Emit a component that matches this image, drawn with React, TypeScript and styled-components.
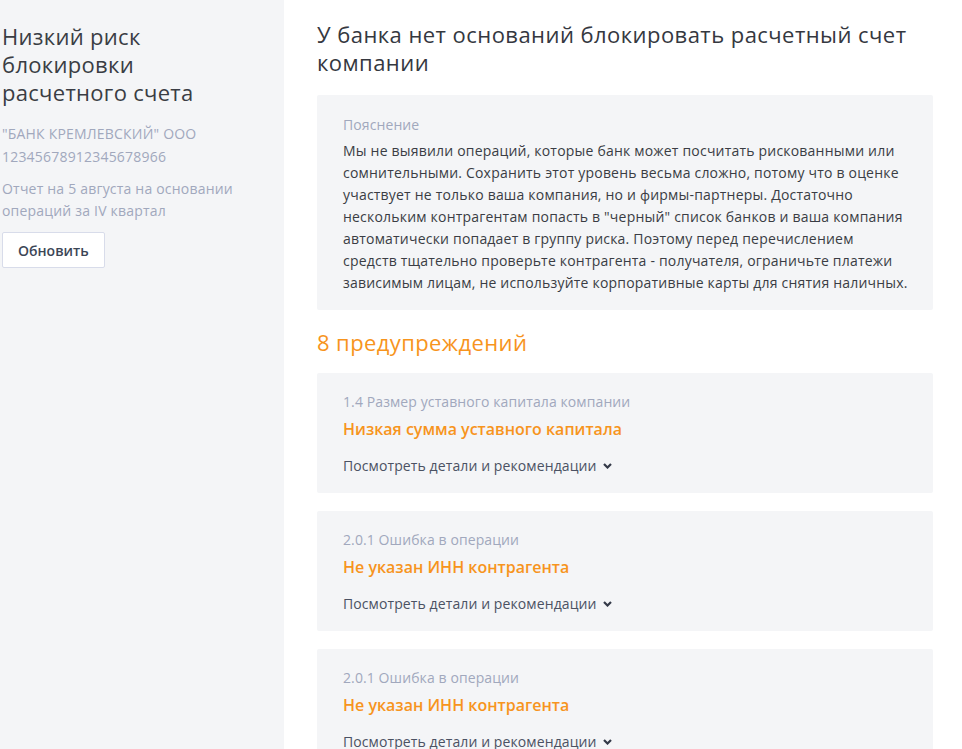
import * as React from 'react';
import styled, { createGlobalStyle } from 'styled-components';

const GlobalStyle = createGlobalStyle`
  html, body {
    margin: 0;
    padding: 0;
    background: #ffffff;
  }
  body {
    font-family: "Open Sans", "Liberation Sans", sans-serif;
    color: #3a3d44;
  }
`;

const Page = styled.div`
  display: flex;
  min-height: 100vh;
`;

const Sidebar = styled.aside`
  flex: 0 0 284px;
  box-sizing: border-box;
  padding: 22px 20px 0 2px;
  background: #f4f5f7;
`;

const SideTitle = styled.h1`
  margin: 0;
  max-width: 215px;
  font-size: 22px;
  line-height: 28px;
  font-weight: 400;
  letter-spacing: 0.3px;
  color: #3a3d44;
`;

const SideMeta = styled.p<{ $lh: number; $mt: number }>`
  margin: ${p => p.$mt}px 0 0;
  font-size: 14px;
  line-height: ${p => p.$lh}px;
  letter-spacing: 0.2px;
  color: #a1a8bd;
`;

const RefreshButton = styled.button`
  margin-top: 10px;
  height: 36px;
  padding: 0 15px;
  background: #ffffff;
  border: 1px solid #d8dcea;
  border-radius: 2px;
  font-family: inherit;
  font-size: 14px;
  font-weight: 600;
  color: #3c4656;
  cursor: pointer;
`;

const Main = styled.main`
  flex: 1;
  padding: 20px 29px 0 33px;
`;

const Heading = styled.h2`
  margin: 0;
  font-size: 22px;
  line-height: 28px;
  font-weight: 500;
  letter-spacing: 0.45px;
  color: #35383f;
`;

const Panel = styled.section`
  background: #f4f5f7;
  border-radius: 2px;
`;

const Explanation = styled(Panel)`
  margin-top: 19px;
  padding: 19px 25px 16px 26px;
`;

const Label = styled.div`
  font-size: 14px;
  line-height: 22px;
  letter-spacing: 0.1px;
  color: #a1a8bd;
`;

const Body = styled.p`
  margin: 4px 0 0;
  font-size: 14px;
  line-height: 22px;
  letter-spacing: 0.2px;
  color: #3a3d44;
`;

const WarningsTitle = styled.h3`
  margin: 18px 0 17px;
  font-size: 22px;
  line-height: 28px;
  font-weight: 400;
  letter-spacing: 0.4px;
  color: #f7941d;
`;

const WarningList = styled.div`
  display: flex;
  flex-direction: column;
  gap: 18px;
`;

const WarningCard = styled(Panel)`
  padding: 18px 26px 16px;
`;

const WarningTitle = styled.div`
  margin-top: 4px;
  font-size: 16px;
  line-height: 24px;
  font-weight: 600;
  color: #f7941d;
`;

const DetailsLink = styled.a`
  display: inline-flex;
  align-items: center;
  gap: 6px;
  margin-top: 14px;
  font-size: 14px;
  line-height: 22px;
  letter-spacing: 0.1px;
  color: #4b5263;
  cursor: pointer;
`;

const Chevron = () => (
  <svg width="9" height="6" viewBox="0 0 9 6" fill="none">
    <path d="M1 1l3.5 3.5L8 1" stroke="#343a48" strokeWidth="2.2" />
  </svg>
);

const warnings = [
  { code: '1.4 Размер уставного капитала компании', title: 'Низкая сумма уставного капитала' },
  { code: '2.0.1 Ошибка в операции', title: 'Не указан ИНН контрагента' },
  { code: '2.0.1 Ошибка в операции', title: 'Не указан ИНН контрагента' },
];

export default function App() {
  return (
    <Page>
      <GlobalStyle />
      <Sidebar>
        <SideTitle>Низкий риск блокировки расчетного счета</SideTitle>
        <SideMeta $lh={23} $mt={16}>
          "БАНК КРЕМЛЕВСКИЙ" ООО
          <br />
          12345678912345678966
        </SideMeta>
        <SideMeta $lh={22} $mt={10}>
          Отчет на 5 августа на основании операций за IV квартал
        </SideMeta>
        <RefreshButton>Обновить</RefreshButton>
      </Sidebar>
      <Main>
        <Heading>У банка нет оснований блокировать расчетный счет компании</Heading>
        <Explanation>
          <Label>Пояснение</Label>
          <Body>
            Мы не выявили операций, которые банк может посчитать рискованными или сомнительными.
            Сохранить этот уровень весьма сложно, потому что в оценке участвует не только ваша
            компания, но и фирмы-партнеры. Достаточно нескольким контрагентам попасть в "черный"
            список банков и ваша компания автоматически попадает в группу риска. Поэтому перед
            перечислением средств тщательно проверьте контрагента - получателя, ограничьте платежи
            зависимым лицам, не используйте корпоративные карты для снятия наличных.
          </Body>
        </Explanation>
        <WarningsTitle>8 предупреждений</WarningsTitle>
        <WarningList>
          {warnings.map((w, i) => (
            <WarningCard key={i}>
              <Label>{w.code}</Label>
              <WarningTitle>{w.title}</WarningTitle>
              <DetailsLink>
                Посмотреть детали и рекомендации <Chevron />
              </DetailsLink>
            </WarningCard>
          ))}
        </WarningList>
      </Main>
    </Page>
  );
}
